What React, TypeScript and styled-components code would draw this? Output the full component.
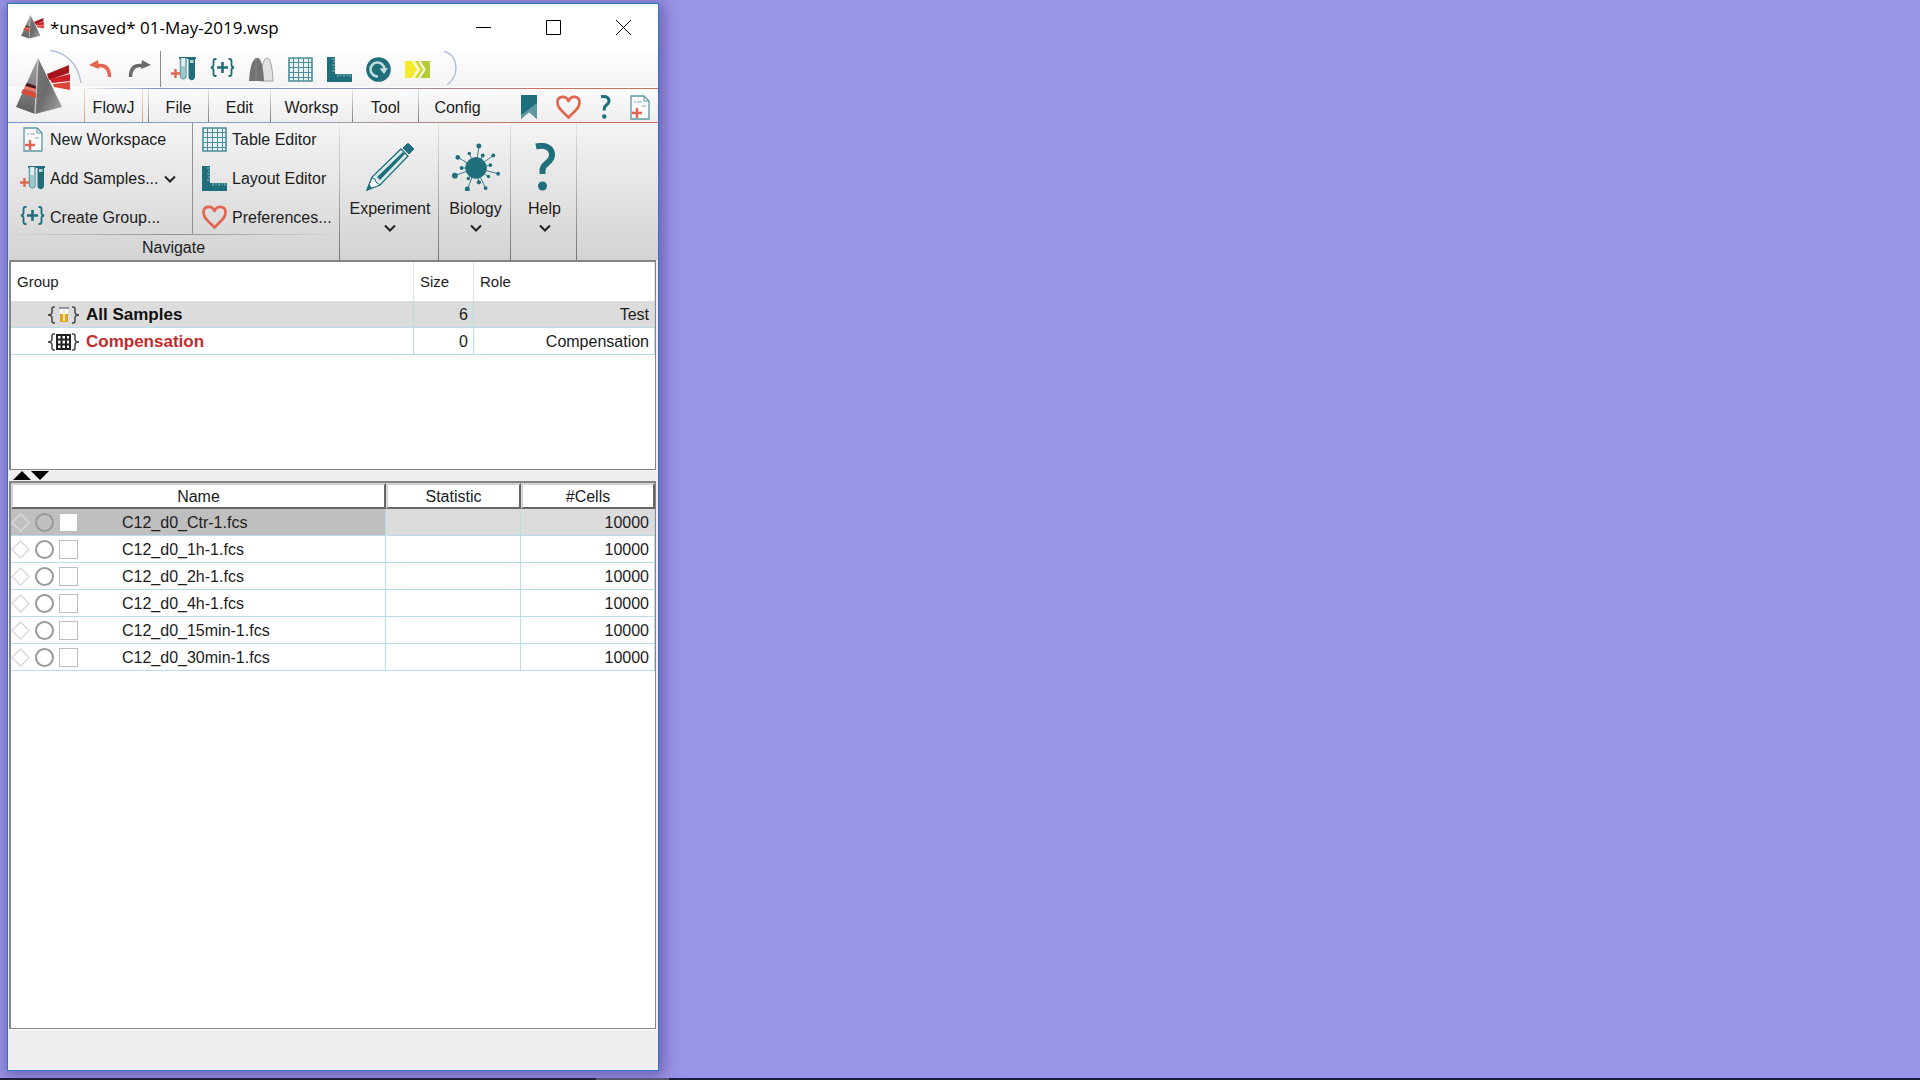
import React from "react";
import styled, { createGlobalStyle, css } from "styled-components";

const teal = "#1f6e7c";
const coral = "#e2664f";
const gridLine = "#b9dcea";

const GlobalStyle = createGlobalStyle`
  * { box-sizing: border-box; }
  body { margin: 0; background: #9a94e8; font-family: "Liberation Sans", Arial, sans-serif; font-size: 16px; color: #1c1c1c; }
  button { font: inherit; color: inherit; background: none; border: 0; padding: 0; margin: 0; white-space: nowrap; }
  svg { display: block; flex: none; }
`;

const Desktop = styled.div`
  height: 100vh;
  display: flex;
  flex-direction: column;
  justify-content: space-between;
  padding-top: 3px;
  overflow: hidden;
`;

const AppWindow = styled.main`
  flex: 1;
  min-height: 0;
  width: min(652px, calc(100vw - 14px));
  margin: 0 0 7px 7px;
  display: flex;
  flex-direction: column;
  background: #efefef;
  border: 1px solid #2f78c4;
  box-shadow: 2px 2px 14px 2px rgba(50, 40, 110, 0.5);
`;

const Taskbar = styled.footer`
  height: 2px;
  flex: none;
  display: flex;
  background: #1f1d3d;
`;

const TaskbarItem = styled.span`
  width: 73px;
  margin-left: 596px;
  background: #57546f;
`;

const TitleBar = styled.header`
  height: 46px;
  flex: none;
  display: flex;
  align-items: center;
  background: #fff;
  padding-left: 12px;
`;

const Title = styled.h1`
  flex: 1;
  margin: 0;
  padding: 1px 0 0 5px;
  font: 400 17px "Open Sans", "Noto Sans", sans-serif;
  color: #000;
`;

const WindowButton = styled.button`
  width: 70px;
  height: 46px;
  display: grid;
  place-items: center;
`;

const Chrome = styled.div`
  flex: none;
  display: grid;
  grid-template-columns: 76px 1fr;
  height: 73px;
  background: linear-gradient(#fdfdfd, #f4f4f4 50%, #fbfbfb 52%, #eeeeee);
  border-bottom: 1px solid;
  border-image: linear-gradient(90deg, #6f97cc, #97a4bd 45%, #c4735f 80%) 1;
`;

const LogoButton = styled.button`
  overflow: visible;
`;

const ChromeRows = styled.div`
  display: flex;
  flex-direction: column;
  min-width: 0;
`;

const QuickBar = styled.div`
  height: 39px;
  flex: none;
  display: flex;
  align-items: center;
  padding-left: 5px;
  gap: 14px;
  border-bottom: 1px solid;
  border-image: linear-gradient(90deg, #f4f4f4, #7d96c6 12%, #8b9bc4 45%, #c4735f 80%) 1;
`;

const QuickDivider = styled.span`
  width: 1px;
  height: 36px;
  margin: 0 -4px 0 -5px;
  background: #8c8c8c;
`;

const IconButton = styled.button`
  flex: none;
`;

const TabRow = styled.nav`
  flex: 1;
  display: flex;
  align-items: stretch;
`;

const Tab = styled.button<{ $w: number; $first?: boolean }>`
  width: ${(p) => p.$w}px;
  padding-top: 4px;
  border-left: 1px solid;
  border-image: linear-gradient(#eee, #777) 1;
  ${(p) =>
    p.$first &&
    css`
      border-right: 1px solid;
      border-image: linear-gradient(#f3e4d8, #dd9c70) 1;
      margin-right: 5px;
    `}
`;

const TabIcons = styled.div`
  margin-left: auto;
  display: flex;
  align-items: center;
  gap: 19px;
  padding: 3px 8px 0 0;
`;

const Ribbon = styled.section`
  flex: none;
  display: flex;
  height: 137px;
  background: linear-gradient(#f4f4f4, #d3d3d3);
`;

const Navigate = styled.div`
  width: 331px;
  display: grid;
  grid-template-columns: 185px 1fr;
  grid-template-rows: 111px 1fr;
`;

const NavColumn = styled.div<{ $divided?: boolean }>`
  display: flex;
  flex-direction: column;
  justify-content: space-between;
  padding: 4px 0 4px ${(p) => (p.$divided ? 12 : 9)}px;
  border-right: ${(p) => (p.$divided ? "1px solid #929292" : "0")};
`;

const NavButton = styled.button`
  display: grid;
  grid-template-columns: 25px auto auto;
  justify-content: start;
  align-items: center;
  justify-items: center;
  gap: 5px;
  height: 25px;
`;

const NavCaption = styled.div`
  grid-column: 1 / -1;
  display: grid;
  place-items: center;
  border-top: 1px solid;
  border-image: linear-gradient(90deg, transparent, #8f8f9c 50%, transparent) 1;
`;

const BigButton = styled.button<{ $w: number }>`
  width: ${(p) => p.$w}px;
  display: flex;
  flex-direction: column;
  align-items: center;
  padding: 20px 0 0 2px;
  border-left: 1px solid;
  border-image: linear-gradient(#e6e6e6, #747474) 1;
`;

const BigLabel = styled.span`
  line-height: 18px;
  margin: 9px 0 6px;
`;

const RibbonRest = styled.div`
  flex: 1;
  border-left: 1px solid;
  border-image: linear-gradient(#e6e6e6, #747474) 1;
`;

const Panel = styled.section<{ $grow?: boolean }>`
  margin: 0 2px 0 1px;
  background: #fff;
  border: solid #858585;
  border-width: 2px 1px 1px 2px;
  ${(p) => (p.$grow ? "flex: 1; min-height: 0;" : "flex: none; height: 210px;")}
`;

const Splitter = styled.div`
  flex: none;
  height: 11px;
  display: flex;
  align-items: center;
  padding-left: 5px;
`;

const StatusBar = styled.footer`
  flex: none;
  height: 41px;
  border-top: 1px solid #fff;
`;

const Table = styled.table`
  width: 100%;
  table-layout: fixed;
  border-collapse: separate;
  border-spacing: 0;
`;

const GroupHead = styled.th`
  height: 39px;
  padding: 0 6px;
  text-align: left;
  font-weight: 400;
  font-size: 15px;
  border-right: 1px solid #e4e4e8;
`;

const Cell = styled.td<{ $right?: boolean; $shade?: string }>`
  height: 27px;
  padding: 1px 5px 0 0;
  line-height: 18px;
  text-align: ${(p) => (p.$right ? "right" : "left")};
  background: ${(p) => p.$shade ?? "#fff"};
  border-right: 1px solid ${gridLine};
  border-bottom: 1px solid ${gridLine};
`;

const GroupName = styled.div<{ $alert?: boolean }>`
  display: flex;
  align-items: center;
  gap: 6px;
  padding-left: 37px;
  font-size: 17px;
  font-weight: 700;
  color: ${(p) => (p.$alert ? "#c42b2b" : "#111")};
`;

const SampleHead = styled.th`
  height: 26px;
  padding: 2px 0 0;
  font-weight: 400;
  line-height: 18px;
  border: 2px solid;
  border-color: #d4d4d4 #666 #666 #d4d4d4;
`;

const SampleName = styled.label`
  display: flex;
  align-items: center;
  gap: 5px;
`;

const Mark = styled.input`
  appearance: none;
  flex: none;
  width: 19px;
  height: 19px;
  margin: 0;
  border: 2px solid #999;
  border-radius: 50%;
  &[type="checkbox"] {
    border: 1px solid #bdbdbd;
    border-radius: 0;
    background: #fff;
  }
`;

const FileName = styled.span`
  padding-left: 39px;
`;

const Tubes = () => (
  <svg width="25" height="25" viewBox="0 0 25 25">
    <path d="M8 1h9M17 1h8" stroke={teal} strokeWidth="2" />
    <path d="M9.5 1v19a3 3 0 0 0 5.5 0V1" fill="#e3f1f3" stroke="#6ba0a9" strokeWidth="1.6" />
    <path d="M10 9h4.500v11q-2 3-4.500 0z" fill="#9cc5cc" />
    <path d="M18 2v18.500a2.800 2.800 0 0 0 5.500 0V2z" fill={teal} stroke={teal} />
    <path d="M19 3h3.500v3H19z" fill="#b7d4d8" />
    <path d="M0 16.500h9M4.500 12v9" stroke={coral} strokeWidth="2.400" />
  </svg>
);

const Braces = () => (
  <svg width="25" height="25" viewBox="0 0 24 25" fill="none" stroke={teal}>
    <path d="M6 2H5Q3 2 3 4v4q0 2-2.500 2.500Q3 11 3 13v4q0 2 2 2h1M18 2h1q2 0 2 2v4q0 2 2.500 2.500Q21 11 21 13v4q0 2-2 2h-1" strokeWidth="1.800" />
    <path d="M6.500 10.500h11M12 5v11" strokeWidth="2.600" />
  </svg>
);

const Grid = () => (
  <svg width="25" height="25" viewBox="0 0 25 25" fill="#e8f2f3" stroke="#4b8d99">
    <path d="M1 1h23v23H1z" strokeWidth="1.600" />
    <path d="M5.500 1v23M10.500 1v23M15.500 1v23M20.500 1v23M1 5.500h23M1 10.500h23M1 15.500h23M1 20.500h23" />
  </svg>
);

const Ruler = () => (
  <svg width="25" height="25" viewBox="0 0 25 25">
    <path d="M0 0h8v17h17v8H0z" fill={teal} />
    <path d="M5 2h3M6 5h2M5 8h3M6 11h2M5 14h3M11 17v3M14 17v2M17 17v3M20 17v2M23 17v3" stroke="#8fb9c0" />
  </svg>
);

const Heart = () => (
  <svg width="25" height="25" viewBox="0 0 25 25">
    <path d="M12.500 22.500C7 16.500 1.500 13.500 1.500 7.500 1.500 0.500 10 0 12.500 6 15 0 23.500 0.500 23.500 7.500c0 6-5.500 9-11 15z" fill="none" stroke={coral} strokeWidth="2.600" strokeLinejoin="round" />
  </svg>
);

const NewDoc = () => (
  <svg width="20" height="25" viewBox="0 0 20 25">
    <path d="M1 1h13l5 5v18H1z" fill="#fafafa" stroke="#5d98a2" strokeWidth="1.300" />
    <path d="M14 1v5h5" fill="none" stroke="#5d98a2" />
    <path d="M4 7h2m1 0h5M12 11h4" stroke="#7eaab2" />
    <path d="M2 18h10M7 13v10" stroke={coral} strokeWidth="2.400" />
  </svg>
);

const Question = ({ height }: { height: number }) => (
  <svg width={(height * 22) / 48} height={height} viewBox="0 0 22 48">
    <path d="M2 3.500C11 1.500 18 4.500 18 12c0 8-9.500 8-9.500 15v4" fill="none" stroke={teal} strokeWidth="6" />
    <circle cx="8.500" cy="43" r="4.500" fill={teal} />
  </svg>
);

const Undo = ({ color, flip }: { color: string; flip?: boolean }) => (
  <svg width="24" height="20" viewBox="0 0 24 20">
    <g transform={flip ? "matrix(-1 0 0 1 24 0)" : undefined}>
      <path d="M6 6.500h5q9.500 0 9.500 11.500" fill="none" stroke={color} strokeWidth="3.400" />
      <path d="M0 6 9 1l1 9z" fill={color} />
    </g>
  </svg>
);

const Peaks = () => (
  <svg width="25" height="25" viewBox="0 0 25 25">
    <path d="M11 24Q13 1 18 1t6 23z" fill="#e2e2e2" stroke="#a6a6a6" />
    <path d="M0 24Q1 6 6 1.500 8 0 10 1.500 14 5 15 24z" fill="#727272" />
    <path d="M7 1v23" stroke="#8a8a8a" />
  </svg>
);

const Cycle = () => (
  <svg width="25" height="25" viewBox="0 0 25 25">
    <circle cx="12.500" cy="12.500" r="12.300" fill={teal} />
    <path d="M12 19.500A7 7 0 1 1 18.500 12" fill="none" stroke="#c3dade" strokeWidth="2.600" />
    <path d="M13.500 11.500l8.500-.5-4 6z" fill="#c3dade" />
  </svg>
);

const Chevrons = () => (
  <svg width="25" height="17" viewBox="0 0 25 17">
    <path d="M0 0h25v17H0z" fill="#b4cc35" />
    <path d="M0 0h11l6 8.500-6 8.500H0z" fill="#f5e92c" />
    <path d="M8 0l5.500 8.500L8 17M14 0l5.500 8.500L14 17" fill="none" stroke="#fff" strokeWidth="2" />
  </svg>
);

const Bookmark = () => (
  <svg width="16" height="24" viewBox="0 0 16 24">
    <path d="M0 0h16v24l-8-7-8 7z" fill={teal} />
    <path d="M16 8v16l-8-7-8 7v-4z" fill="#5f98a2" />
  </svg>
);

const ChevronDown = () => (
  <svg width="12" height="8" viewBox="0 0 12 8">
    <path d="M1 1.500 6 6.500l5-5" fill="none" stroke="#222" strokeWidth="2" />
  </svg>
);

const Pencil = () => (
  <svg width="48" height="48" viewBox="0 0 48 48">
    <path d="M1 47 6 34 35 6l7 7L14 42z" fill="#dcebec" stroke={teal} strokeWidth="1.300" />
    <path d="M1 47 6 35l3 1 1 3 4 3z" fill="#fff" stroke={teal} />
    <path d="M1 47l2-6 3 4z" fill={teal} />
    <path d="M11 34 37 9l2 2-25 26z" fill={teal} />
    <path d="M37 5l4-4q1-1 2 0l4 4q1 1 0 2l-4 4z" fill={teal} stroke={teal} />
  </svg>
);

const spikes = [
  [27, 2, 2.6], [42, 12, 2], [47, 31, 2], [34, 46, 2], [15, 47, 2.6], [2, 33, 3], [5, 14, 2.4],
  [17, 10, 1.8], [31, 12, 2], [39, 22, 2], [37, 34, 1.8], [27, 40, 2.2], [16, 36, 1.8], [9, 25, 2],
];

const Virus = () => (
  <svg width="48" height="48" viewBox="-1 -1 50 50" fill={teal} stroke={teal}>
    {spikes.map(([x, y, r], i) => (
      <g key={i}>
        <path d={`M24 25L${x} ${y}`} strokeWidth="0.900" />
        <circle cx={x} cy={y} r={r} stroke="none" />
      </g>
    ))}
    <circle cx="24" cy="25" r="10.800" />
  </svg>
);

const PyramidArt = () => (
  <>
    <defs>
      <linearGradient id="faceLeft" x1="0" y1="0" x2="0" y2="1">
        <stop offset="0" stopColor="#a8a8a8" />
        <stop offset="1" stopColor="#5e5e5e" />
      </linearGradient>
      <linearGradient id="faceRight" x1="0" y1="0" x2="1" y2="1">
        <stop offset="0" stopColor="#7a7a7a" />
        <stop offset="0.5" stopColor="#6c6c6c" />
        <stop offset="1" stopColor="#a8a8a8" />
      </linearGradient>
    </defs>
    <path d="M31 16 53 7v8L33 22z" fill="#a3161b" />
    <path d="M34 21l20-5v7l-18 2z" fill="#cf2028" />
    <path d="M37 26l17-2v8l-16-3z" fill="#dc4437" />
    <path d="M22 0 0 49l19 7z" fill="url(#faceLeft)" />
    <path d="M22 0 46 49 19 56z" fill="url(#faceRight)" />
    <path d="M22 1 19 56" stroke="#c8c8c8" strokeWidth="1.400" />
    <path d="M11 25l9 3v3L9 28z" fill="#4a1a1a" />
    <path d="M9 28l11 3v3L8 31z" fill="#ef7868" />
    <path d="M7 31l13 4v5L5 35z" fill="#dd4a3a" />
  </>
);

const Logo = () => (
  <svg width="76" height="72" viewBox="0 0 76 72">
    <path d="M42 .500C58 2 70 14 73 33" fill="none" stroke="#a9c0e0" strokeWidth="1.400" />
    <g transform="translate(8 8)">
      <PyramidArt />
    </g>
  </svg>
);

const SmallLogo = () => (
  <svg width="25" height="24" viewBox="0 0 54 57">
    <PyramidArt />
  </svg>
);

const GroupIcon = ({ matrix }: { matrix?: boolean }) => (
  <svg width="32" height="18" viewBox="0 0 32 18" fill="none">
    <path d="M7 1H6Q4 1 4 3v3q0 3-4 3 4 0 4 3v3q0 2 2 2h1M24 1h1q2 0 2 2v3q0 3 4 3-4 0-4 3v3q0 2-2 2h-1" stroke="#444" strokeWidth="1.500" />
    {matrix ? (
      <>
        <path d="M9 2h13v14H9z" fill="#fff" stroke="#222" strokeWidth="2" />
        <path d="M13.500 2v14M18 2v14M9 6.500h13M9 11.500h13" stroke="#222" strokeWidth="2" />
      </>
    ) : (
      <>
        <path d="M12 2h8v14h-8z" fill="#fff" />
        <path d="M11 2h10" stroke="#777" strokeWidth="1.500" />
        <path d="M12 8h8v8h-8z" fill="#e2a520" />
        <path d="M15 4h2v11h-2z" fill="#fbe7b0" />
      </>
    )}
  </svg>
);

const Diamond = () => (
  <svg width="19" height="19" viewBox="0 0 19 19">
    <path d="M9.500 1 18 9.500 9.500 18 1 9.500z" fill="none" stroke="#d9d9d9" strokeWidth="1.500" />
  </svg>
);

const SplitArrows = () => (
  <svg width="36" height="9" viewBox="0 0 36 9">
    <path d="M0 9 9 0l9 9zM18 0h18l-9 9z" fill="#000" />
  </svg>
);

const quickTools = [
  { name: "Add samples", icon: <Tubes /> },
  { name: "Create group", icon: <Braces /> },
  { name: "Compare populations", icon: <Peaks /> },
  { name: "Table editor", icon: <Grid /> },
  { name: "Layout editor", icon: <Ruler /> },
  { name: "Refresh", icon: <Cycle /> },
  { name: "Run", icon: <Chevrons /> },
];

const tabs: [string, number][] = [
  ["File", 60],
  ["Edit", 62],
  ["Worksp", 82],
  ["Tool", 66],
  ["Config", 78],
];

const samples = ["Ctr-1", "1h-1", "2h-1", "4h-1", "15min-1", "30min-1"];

export default function App() {
  return (
    <Desktop>
      <GlobalStyle />
      <AppWindow>
        <TitleBar>
          <SmallLogo />
          <Title>*unsaved* 01-May-2019.wsp</Title>
          <WindowButton aria-label="Minimize">
            <svg width="15" height="15" viewBox="0 0 15 15"><path d="M0 7.500h15" stroke="#000" /></svg>
          </WindowButton>
          <WindowButton aria-label="Maximize">
            <svg width="15" height="15" viewBox="0 0 15 15"><path d="M.5.5h14v14H.5z" fill="none" stroke="#000" /></svg>
          </WindowButton>
          <WindowButton aria-label="Close">
            <svg width="15" height="15" viewBox="0 0 15 15"><path d="M0 0l15 15M15 0 0 15" stroke="#000" /></svg>
          </WindowButton>
        </TitleBar>

        <Chrome>
          <LogoButton aria-label="Application menu"><Logo /></LogoButton>
          <ChromeRows>
            <QuickBar>
              <IconButton aria-label="Undo"><Undo color={coral} /></IconButton>
              <IconButton aria-label="Redo"><Undo color="#6a6a6a" flip /></IconButton>
              <QuickDivider />
              {quickTools.map((t) => (
                <IconButton key={t.name} aria-label={t.name}>{t.icon}</IconButton>
              ))}
              <svg width="18" height="36" viewBox="0 0 18 36">
                <path d="M-3 0Q11 1 12 17q0 10-9 17" fill="none" stroke="#a9c0e0" strokeWidth="1.400" />
              </svg>
            </QuickBar>
            <TabRow>
              <Tab $w={59} $first>FlowJ</Tab>
              {tabs.map(([label, w]) => (
                <Tab key={label} $w={w}>{label}</Tab>
              ))}
              <TabIcons>
                <IconButton aria-label="Bookmark"><Bookmark /></IconButton>
                <IconButton aria-label="Preferences"><Heart /></IconButton>
                <IconButton aria-label="Help"><Question height={24} /></IconButton>
                <IconButton aria-label="New workspace"><NewDoc /></IconButton>
              </TabIcons>
            </TabRow>
          </ChromeRows>
        </Chrome>

        <Ribbon>
          <Navigate>
            <NavColumn $divided>
              <NavButton><NewDoc />New Workspace</NavButton>
              <NavButton><Tubes />Add Samples...<ChevronDown /></NavButton>
              <NavButton><Braces />Create Group...</NavButton>
            </NavColumn>
            <NavColumn>
              <NavButton><Grid />Table Editor</NavButton>
              <NavButton><Ruler />Layout Editor</NavButton>
              <NavButton><Heart />Preferences...</NavButton>
            </NavColumn>
            <NavCaption>Navigate</NavCaption>
          </Navigate>
          <BigButton $w={99}><Pencil /><BigLabel>Experiment</BigLabel><ChevronDown /></BigButton>
          <BigButton $w={72}><Virus /><BigLabel>Biology</BigLabel><ChevronDown /></BigButton>
          <BigButton $w={66}><Question height={48} /><BigLabel>Help</BigLabel><ChevronDown /></BigButton>
          <RibbonRest />
        </Ribbon>

        <Panel aria-label="Groups">
          <Table>
            <colgroup>
              <col />
              <col style={{ width: 60 }} />
              <col style={{ width: 181 }} />
            </colgroup>
            <thead>
              <tr><GroupHead>Group</GroupHead><GroupHead>Size</GroupHead><GroupHead>Role</GroupHead></tr>
            </thead>
            <tbody>
              <tr>
                <Cell $shade="#dcdcdc"><GroupName><GroupIcon />All Samples</GroupName></Cell>
                <Cell $shade="#dcdcdc" $right>6</Cell>
                <Cell $shade="#dcdcdc" $right>Test</Cell>
              </tr>
              <tr>
                <Cell><GroupName $alert><GroupIcon matrix />Compensation</GroupName></Cell>
                <Cell $right>0</Cell>
                <Cell $right>Compensation</Cell>
              </tr>
            </tbody>
          </Table>
        </Panel>

        <Splitter><SplitArrows /></Splitter>

        <Panel $grow aria-label="Samples">
          <Table>
            <colgroup>
              <col />
              <col style={{ width: 135 }} />
              <col style={{ width: 134 }} />
            </colgroup>
            <thead>
              <tr><SampleHead>Name</SampleHead><SampleHead>Statistic</SampleHead><SampleHead>#Cells</SampleHead></tr>
            </thead>
            <tbody>
              {samples.map((s, i) => (
                <tr key={s}>
                  <Cell $shade={i === 0 ? "#bfbfbf" : undefined}>
                    <SampleName>
                      <Diamond />
                      <Mark type="radio" name="sample" aria-label={`Select ${s}`} />
                      <Mark type="checkbox" aria-label={`Mark ${s}`} />
                      <FileName>C12_d0_{s}.fcs</FileName>
                    </SampleName>
                  </Cell>
                  <Cell $shade={i === 0 ? "#dcdcdc" : undefined} />
                  <Cell $shade={i === 0 ? "#dcdcdc" : undefined} $right>10000</Cell>
                </tr>
              ))}
            </tbody>
          </Table>
        </Panel>
        <StatusBar />
      </AppWindow>
      <Taskbar><TaskbarItem /></Taskbar>
    </Desktop>
  );
}
